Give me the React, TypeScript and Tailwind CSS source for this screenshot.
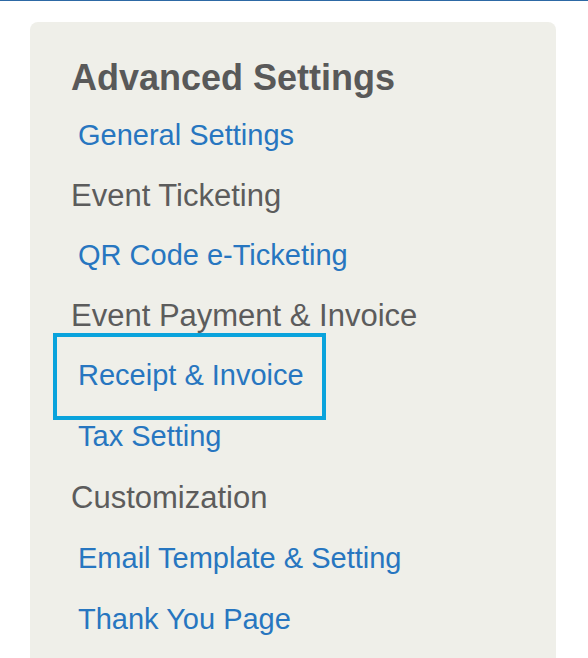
const ITEMS: { label: string; kind: "link" | "group"; active?: boolean; row: string }[] = [
  { label: "General Settings", kind: "link", row: "h-[60px]" },
  { label: "Event Ticketing", kind: "group", row: "h-[60px]" },
  { label: "QR Code e-Ticketing", kind: "link", row: "h-[60px]" },
  { label: "Event Payment & Invoice", kind: "group", row: "h-[60px]" },
  { label: "Receipt & Invoice", kind: "link", active: true, row: "h-[60px]" },
  { label: "Tax Setting", kind: "link", row: "h-[61px]" },
  { label: "Customization", kind: "group", row: "h-[61px]" },
  { label: "Email Template & Setting", kind: "link", row: "h-[61px]" },
  { label: "Thank You Page", kind: "link", row: "h-[61px]" },
];

export default function App() {
  return (
    <div className="h-[658px] overflow-hidden bg-white font-['Liberation_Sans',Arial,sans-serif]">
      {/* top rule */}
      <div className="h-px bg-[#2d69a5]" />

      <div className="pt-[21px] pl-[30px] pr-[32px]">
        <div className="min-h-[700px] rounded-t-lg bg-[#efefe9] pt-[34px] pl-[41px]">
          <h2 className="text-[36px] leading-[44px] font-bold text-[#595959]">
            Advanced Settings
          </h2>

          <ul className="mt-[5.5px]">
            {ITEMS.map((item) => (
              <li key={item.label} className={`relative flex items-center ${item.row}`}>
                {item.active && (
                  <span className="pointer-events-none absolute -top-[13px] -bottom-[14px] -left-[18px] w-[273px] border-4 border-[#0aa3dc]" />
                )}
                {item.kind === "link" ? (
                  <a href="#" className="pl-[7px] text-[29px] leading-none text-[#2776c0]">
                    {item.label}
                  </a>
                ) : (
                  <span className="text-[31px] leading-none text-[#5c5c5c]">{item.label}</span>
                )}
              </li>
            ))}
          </ul>
        </div>
      </div>
    </div>
  );
}
